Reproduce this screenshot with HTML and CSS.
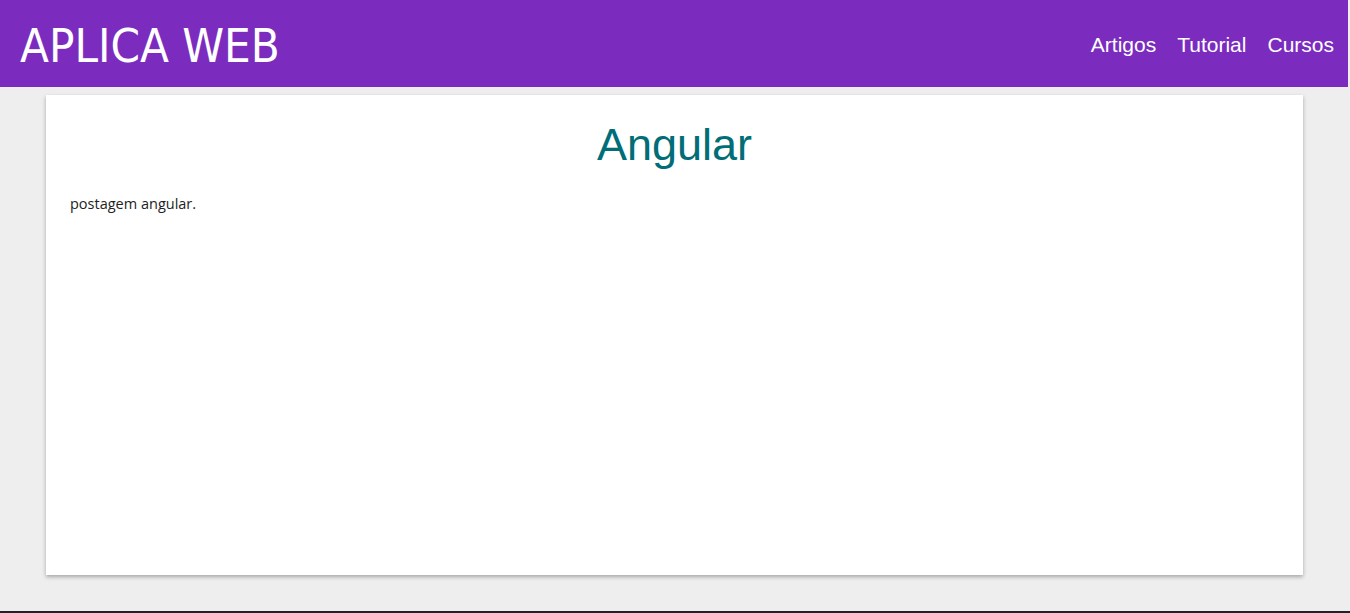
FILE: index.html
```html
<!DOCTYPE html>
<html lang="pt">
<head>
<meta charset="utf-8">
<title>Aplica Web</title>
<link rel="stylesheet" href="styles.css">
</head>
<body>
<header class="topbar">
  <div class="brand">APLICA WEB</div>
  <nav class="nav">
    <a href="#">Artigos</a>
    <a href="#">Tutorial</a>
    <a href="#">Cursos</a>
  </nav>
</header>
<main class="card">
  <h1 class="title">Angular</h1>
  <p class="text">postagem angular.</p>
</main>
<div class="taskbar"></div>
</body>
</html>
```
FILE: styles.css
```css
html, body {
  margin: 0;
  padding: 0;
  background: #eeeeee;
}
body {
  height: 613px;
  overflow: hidden;
  display: flex;
  flex-direction: column;
}
.topbar {
  height: 87px;
  background: #7b2cbf;
  display: flex;
  align-items: center;
  justify-content: space-between;
  padding: 0 14px 0 20px;
  margin-right: 2px;
  box-sizing: border-box;
  flex-shrink: 0;
}
.brand {
  font-family: "DejaVu Sans Condensed", "DejaVu Sans", sans-serif;
  font-size: 47px;
  color: #ffffff;
  margin-top: 4px;
}
.nav {
  display: flex;
  gap: 21px;
  margin-top: 2px;
}
.nav a {
  font-family: "Liberation Sans", Arial, sans-serif;
  font-size: 21px;
  color: #ffffff;
  text-decoration: none;
}
.card {
  margin: 8px 47px 0 46px;
  height: 480px;
  background: #ffffff;
  box-shadow: 0 2px 4px rgba(0,0,0,0.3);
  padding: 0 24px;
  box-sizing: border-box;
  flex-shrink: 0;
}
.title {
  margin: 0;
  padding-top: 24px;
  text-align: center;
  font-family: "Liberation Sans", Arial, sans-serif;
  font-weight: normal;
  font-size: 45px;
  line-height: 52px;
  color: #006d77;
}
.text {
  margin: 23px 0 0 0;
  font-family: "Open Sans", "Noto Sans", sans-serif;
  font-size: 14.5px;
  color: #222222;
}
.taskbar {
  margin-top: auto;
  height: 2px;
  background: #222228;
}
```
